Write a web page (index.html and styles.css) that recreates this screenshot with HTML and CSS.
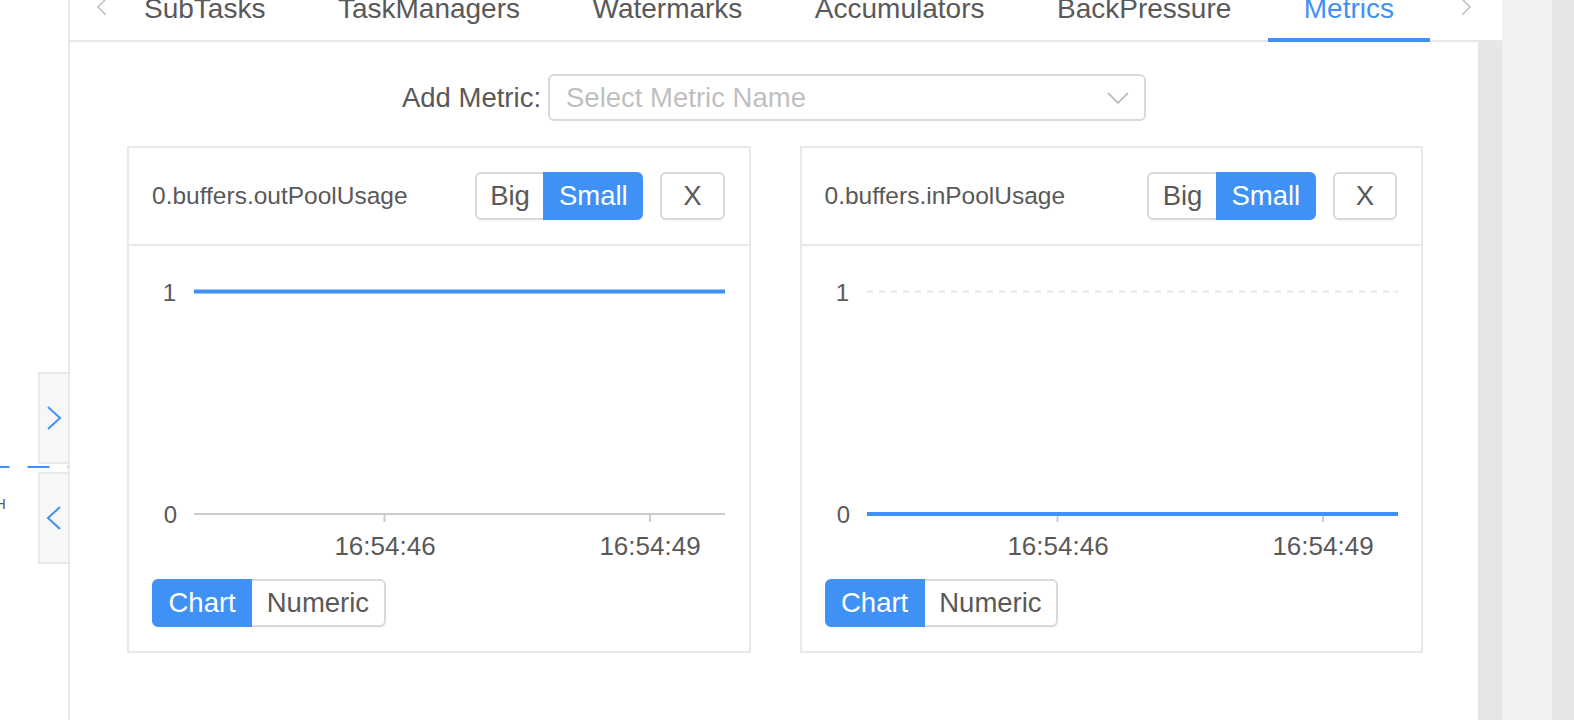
FILE: index.html
```html
<!DOCTYPE html>
<html lang="en">
<head>
<meta charset="utf-8">
<title>Metrics</title>
<link rel="stylesheet" href="styles.css">
</head>
<body>
<div class="page">
  <aside class="sidebar">
    <div class="graph">
      <div class="edge"></div>
      <span class="node-label">H</span>
    </div>
    <button class="handle" type="button">
      <svg width="16" height="26" viewBox="0 0 16 26"><polyline points="2,2 14,13 2,24" fill="none" stroke="#3f91f5" stroke-width="2"/></svg>
    </button>
    <button class="handle" type="button">
      <svg width="16" height="26" viewBox="0 0 16 26"><polyline points="14,2 2,13 14,24" fill="none" stroke="#3f91f5" stroke-width="2"/></svg>
    </button>
  </aside>

  <div class="main">
    <div class="tabbar">
      <div class="nav nav-prev">
        <svg width="12" height="18" viewBox="0 0 12 18"><polyline points="10,1 2,9 10,17" fill="none" stroke="#c4c4c4" stroke-width="1.6"/></svg>
      </div>
      <div class="tab-list">
        <div class="tab">SubTasks</div>
        <div class="tab">TaskManagers</div>
        <div class="tab">Watermarks</div>
        <div class="tab">Accumulators</div>
        <div class="tab">BackPressure</div>
        <div class="tab active">Metrics</div>
      </div>
      <div class="nav nav-next">
        <svg width="12" height="18" viewBox="0 0 12 18"><polyline points="2,1 10,9 2,17" fill="none" stroke="#c4c4c4" stroke-width="1.6"/></svg>
      </div>
    </div>

    <div class="body">
      <div class="content">
        <div class="add-metric">
          <span class="label">Add Metric:</span>
          <div class="select">
            <span class="placeholder">Select Metric Name</span>
            <svg class="select-arrow" width="22" height="13" viewBox="0 0 22 13"><polyline points="1,1 11,11 21,1" fill="none" stroke="#bfbfbf" stroke-width="1.8"/></svg>
          </div>
        </div>

        <div class="cards">
          <div class="card">
            <div class="card-head">
              <span class="title">0.buffers.outPoolUsage</span>
              <div class="actions">
                <div class="btn-group">
                  <button class="btn" type="button">Big</button>
                  <button class="btn primary" type="button">Small</button>
                </div>
                <button class="btn single" type="button">X</button>
              </div>
            </div>
            <div class="card-body">
              <svg class="chart" width="619" height="333">
                <line class="axis" x1="65" y1="268" x2="596" y2="268"/>
                <line class="axis" x1="255.5" y1="268" x2="255.5" y2="276"/>
                <line class="axis" x1="521" y1="268" x2="521" y2="276"/>
                <line class="series" x1="65" y1="45.5" x2="596" y2="45.5"/>
                <text class="ylabel" x="47" y="54.5">1</text>
                <text class="ylabel" x="48" y="276.5">0</text>
                <text class="xlabel" x="256" y="309">16:54:46</text>
                <text class="xlabel" x="521" y="309">16:54:49</text>
              </svg>
              <div class="btn-group toggle">
                <button class="btn primary" type="button">Chart</button>
                <button class="btn" type="button">Numeric</button>
              </div>
            </div>
          </div>

          <div class="card">
            <div class="card-head">
              <span class="title">0.buffers.inPoolUsage</span>
              <div class="actions">
                <div class="btn-group">
                  <button class="btn" type="button">Big</button>
                  <button class="btn primary" type="button">Small</button>
                </div>
                <button class="btn single" type="button">X</button>
              </div>
            </div>
            <div class="card-body">
              <svg class="chart" width="619" height="333">
                <line class="split" x1="65" y1="45.5" x2="596" y2="45.5"/>
                <line class="axis" x1="65" y1="268" x2="596" y2="268"/>
                <line class="axis" x1="255.5" y1="268" x2="255.5" y2="276"/>
                <line class="axis" x1="521" y1="268" x2="521" y2="276"/>
                <line class="series" x1="65" y1="268" x2="596" y2="268"/>
                <text class="ylabel" x="47" y="54.5">1</text>
                <text class="ylabel" x="48" y="276.5">0</text>
                <text class="xlabel" x="256" y="309">16:54:46</text>
                <text class="xlabel" x="521" y="309">16:54:49</text>
              </svg>
              <div class="btn-group toggle">
                <button class="btn primary" type="button">Chart</button>
                <button class="btn" type="button">Numeric</button>
              </div>
            </div>
          </div>
        </div>
      </div>
      <div class="gutter"></div>
    </div>
  </div>

  <div class="track-a"></div>
  <div class="track-b"></div>
</div>
</body>
</html>
```

FILE: styles.css
```css
* { box-sizing: border-box; }

html, body {
  margin: 0;
  padding: 0;
  background: #fff;
}

body {
  font-family: "Liberation Sans", Arial, sans-serif;
  color: #595959;
}

.page {
  display: flex;
  width: 1574px;
  height: 720px;
  overflow: hidden;
}

/* ---------- left sidebar ---------- */
.sidebar {
  position: relative;
  width: 70px;
  flex: none;
  border-right: 2px solid #e8e8e8;
  background: #fff;
  display: flex;
  flex-direction: column;
  align-items: flex-end;
  padding-top: 372px;
  gap: 8px;
  overflow: hidden;
}

.graph {
  position: absolute;
  inset: 0;
}

.edge {
  position: absolute;
  left: 0;
  top: 466px;
  width: 68px;
  height: 2px;
  background-image: linear-gradient(to right, #3f91f5 0 22px, transparent 22px 40px);
  background-size: 40px 2px;
  background-repeat: repeat-x;
  background-position: -12.5px 0;
}

.node-label {
  position: absolute;
  left: -5px;
  top: 495px;
  font-size: 15px;
  line-height: 17px;
  color: #595959;
}

.handle {
  position: relative;
  z-index: 1;
  width: 30px;
  height: 92px;
  padding: 0;
  margin: 0;
  border: 2px solid #e8e8e8;
  border-right: none;
  background: #f7f7f7;
  display: flex;
  align-items: center;
  justify-content: center;
}

.handle svg { display: block; }

/* ---------- main column ---------- */
.main {
  width: 1432px;
  flex: none;
  display: flex;
  flex-direction: column;
}

.tabbar {
  height: 42px;
  flex: none;
  display: flex;
  background: #fff;
  box-shadow: inset 0 -2px 0 #e8e8e8;
}

.nav {
  flex: none;
  display: flex;
  align-items: flex-start;
}

.nav svg {
  display: block;
  margin-top: -2px;
}

.nav-prev {
  width: 37.75px;
  padding-left: 26px;
}

.nav-next {
  width: 62px;
  padding-left: 20px;
}

.tab-list {
  flex: 1;
  display: flex;
  align-items: flex-start;
  overflow: hidden;
}

.tab {
  flex: none;
  height: 48px;
  margin-top: -6px;
  padding: 0 36.25px;
  font-size: 28px;
  line-height: 30px;
  color: #595959;
  white-space: nowrap;
}

.tab.active {
  color: #3f91f5;
  box-shadow: inset 0 -4px 0 #3f91f5;
}

.body {
  flex: 1;
  display: flex;
}

.content {
  width: 1408px;
  flex: none;
  background: #fff;
  padding-top: 32px;
}

.gutter {
  flex: 1;
  background: #e6e6e6;
}

.track-a {
  width: 50px;
  flex: none;
  background: #f1f1f1;
}

.track-b {
  flex: 1;
  background: #e6e6e6;
}

/* ---------- add metric ---------- */
.add-metric {
  display: flex;
  justify-content: center;
  align-items: center;
  gap: 7px;
  height: 47px;
}

.label {
  font-size: 27.5px;
  color: #595959;
  white-space: nowrap;
}

.select {
  width: 598px;
  height: 47px;
  border: 2px solid #d9d9d9;
  border-radius: 6px;
  display: flex;
  align-items: center;
  justify-content: space-between;
  padding: 0 15px 0 16px;
}

.placeholder {
  font-size: 27.5px;
  color: #bfbfbf;
  white-space: nowrap;
}

.select-arrow { display: block; margin-top: 1px; }

/* ---------- cards ---------- */
.cards {
  margin-top: 25px;
  padding: 0 55px 0 57px;
  display: grid;
  grid-template-columns: 1fr 1fr;
  gap: 49px;
}

.card {
  border: 2px solid #e8e8e8;
  background: #fff;
}

.card-head {
  display: flex;
  align-items: center;
  justify-content: space-between;
  padding: 24px 24px 24px 23px;
  border-bottom: 2px solid #e8e8e8;
}

.title {
  font-size: 24.5px;
  color: #595959;
  white-space: nowrap;
}

.actions {
  display: flex;
  gap: 17px;
}

.btn-group {
  display: flex;
}

.btn {
  height: 48px;
  margin: 0;
  padding: 0 13.5px;
  border: 2px solid #d9d9d9;
  background: #fff;
  color: #595959;
  font-family: "Liberation Sans", Arial, sans-serif;
  font-size: 27.5px;
  line-height: 44px;
  white-space: nowrap;
  box-shadow: 0 2px 0 rgba(0, 0, 0, 0.02);
}

.btn-group .btn:first-child { border-radius: 6px 0 0 6px; }
.btn-group .btn:last-child { border-radius: 0 6px 6px 0; margin-left: -2px; }

.btn.primary {
  position: relative;
  z-index: 1;
  background: #3f91f5;
  border-color: #3f91f5;
  color: #fff;
}

.btn.single {
  border-radius: 6px;
  padding: 0 21px;
}

.card-body {
  padding-bottom: 24px;
}

.chart {
  display: block;
  overflow: visible;
}

.chart .axis {
  stroke: #cccccc;
  stroke-width: 2;
}

.chart .split {
  stroke: #e6e6e6;
  stroke-width: 2;
  stroke-dasharray: 6 6;
}

.chart .series {
  stroke: #3f91f5;
  stroke-width: 4;
}

.chart .ylabel {
  font-family: "Liberation Sans", Arial, sans-serif;
  font-size: 24px;
  fill: #595959;
  text-anchor: end;
}

.chart .xlabel {
  font-family: "Liberation Sans", Arial, sans-serif;
  font-size: 26px;
  fill: #595959;
  text-anchor: middle;
}

.toggle {
  margin-left: 23px;
}

.toggle .btn { padding: 0 14.5px; }
```
